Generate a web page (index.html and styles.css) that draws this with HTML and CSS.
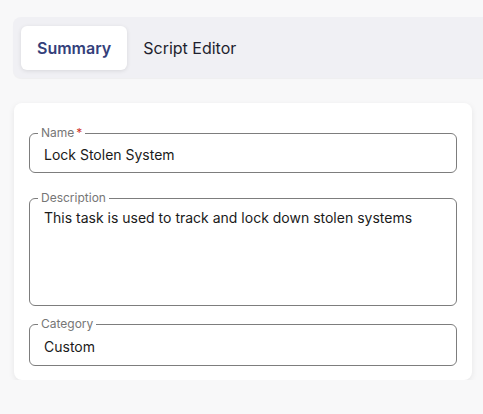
FILE: index.html
```html
<!DOCTYPE html>
<html lang="en">
<head>
<meta charset="utf-8">
<title>Task</title>
<link rel="stylesheet" href="styles.css">
</head>
<body>
<div class="page">
  <div class="tabbar">
    <div class="tab tab-active">Summary</div>
    <div class="tab">Script Editor</div>
  </div>
  <div class="card">
    <fieldset class="field field-name">
      <legend class="label">Name<span class="req">*</span></legend>
      <div class="value">Lock Stolen System</div>
    </fieldset>
    <fieldset class="field field-desc">
      <legend class="label">Description</legend>
      <div class="value">This task is used to track and lock down stolen systems</div>
    </fieldset>
    <fieldset class="field field-cat">
      <legend class="label">Category</legend>
      <div class="value">Custom</div>
    </fieldset>
  </div>
</div>
</body>
</html>
```
FILE: styles.css
```css
html, body {
  margin: 0;
  padding: 0;
  background: #f8f8f9;
  font-family: Inter, "Noto Sans", sans-serif;
}
.page {
  padding: 17px 0 0 13px;
}
.tabbar {
  display: flex;
  align-items: center;
  height: 61px;
  box-sizing: border-box;
  padding: 0 8px;
  background: #f0f0f4;
  border-radius: 8px 0 0 8px;
  box-shadow: 0 1px 1px rgba(0,0,0,0.04);
}
.tab {
  height: 44px;
  display: flex;
  align-items: center;
  padding: 0 16px;
  font-size: 16px;
  font-weight: 400;
  color: #1e1f2e;
  border-radius: 6px;
}
.tab-active {
  background: #ffffff;
  color: #34407a;
  font-weight: 600;
  box-shadow: 0 1px 4px rgba(0,0,0,0.10);
}
.card {
  margin: 25px 11px 0 1px;
  background: #ffffff;
  border-radius: 8px;
  box-shadow: 0 2px 6px rgba(0,0,0,0.08);
  padding: 23px 15px 14px 15px;
  display: flex;
  flex-direction: column;
}
.field {
  margin: 0;
  border: 1px solid #7d7d7d;
  border-radius: 6px;
  padding: 0 14px;
  min-width: 0;
}
.label {
  font-size: 12px;
  line-height: 14px;
  color: #767676;
  padding: 0 3px;
  margin-left: -6px;
}
.req {
  color: #d0342c;
  margin-left: 2px;
}
.value {
  font-size: 14px;
  line-height: 20px;
  color: #1a1a1a;
}
.field-name {
  height: 47px;
  box-sizing: border-box;
  padding-top: 5px;
}
.field-desc {
  margin-top: 18px;
  height: 115px;
  box-sizing: border-box;
  padding-top: 3px;
}
.field-cat {
  margin-top: 11px;
  height: 49px;
  box-sizing: border-box;
  padding-top: 6px;
}
```
